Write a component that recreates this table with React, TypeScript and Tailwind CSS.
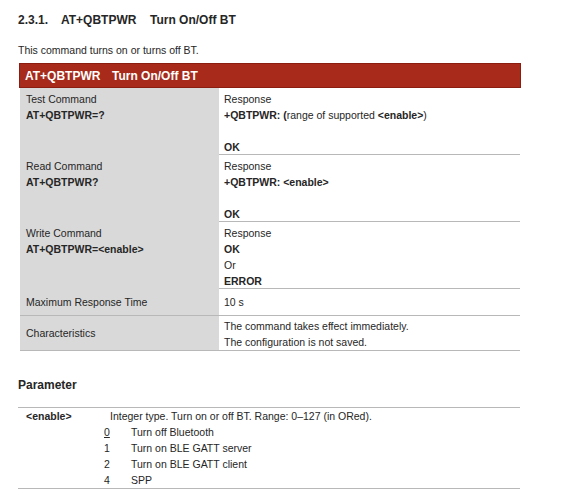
import React from "react";

const rows = [
  {
    label: "Test Command",
    cmd: "AT+QBTPWR=?",
    lines: [
      <span>Response</span>,
      <span>
        <b>+QBTPWR: (</b>range of supported <b>&lt;enable&gt;</b>)
      </span>,
      <span>&nbsp;</span>,
      <b>OK</b>,
    ],
  },
  {
    label: "Read Command",
    cmd: "AT+QBTPWR?",
    lines: [
      <span>Response</span>,
      <b>+QBTPWR: &lt;enable&gt;</b>,
      <span>&nbsp;</span>,
      <b>OK</b>,
    ],
  },
  {
    label: "Write Command",
    cmd: "AT+QBTPWR=<enable>",
    lines: [<span>Response</span>, <b>OK</b>, <span>Or</span>, <b>ERROR</b>],
  },
];

const values = [
  { v: "0", text: "Turn off Bluetooth", def: true },
  { v: "1", text: "Turn on BLE GATT server" },
  { v: "2", text: "Turn on BLE GATT client" },
  { v: "4", text: "SPP" },
];

export default function App() {
  return (
    <div className="w-[566px] h-[500px] bg-white text-[#262626] font-['Liberation_Sans',Arial,sans-serif] text-[10.5px] leading-[16px]">
      <div className="pl-[18px] pt-[12px] w-[520px]">
        <h2 className="flex text-[12px] leading-[16px] font-bold">
          <span className="w-[43px]">2.3.1.</span>
          <span className="w-[89px]">AT+QBTPWR</span>
          <span>Turn On/Off BT</span>
        </h2>

        <p className="mt-[14px]">This command turns on or turns off BT.</p>

        {/* command table */}
        <div className="mt-[5px] ml-[1px] w-[502px] h-[25px] flex items-center pl-[5px] bg-[#a72a1a] border border-[#8a1d10] text-white text-[12px] font-bold">
          <span className="w-[87px]">AT+QBTPWR</span>
          <span>Turn On/Off BT</span>
        </div>

        <div className="ml-[2px] w-[500px]">
          {rows.map((r) => (
            <div
              key={r.label}
              className="grid grid-cols-[199px_1fr] h-[67px] border-b border-[#b8b8b8]"
            >
              <div className="bg-[#d9d9d9] pl-[6px] pt-[3px]">
                <div>{r.label}</div>
                <div className="font-bold">{r.cmd}</div>
              </div>
              <div className="pl-[5px] pt-[3px]">
                {r.lines.map((l, i) => (
                  <div key={i}>{l}</div>
                ))}
              </div>
            </div>
          ))}

          <div className="grid grid-cols-[199px_1fr] h-[27px] border-b border-[#b8b8b8]">
            <div className="bg-[#d9d9d9] pl-[6px] flex items-center">Maximum Response Time</div>
            <div className="pl-[5px] flex items-center">10 s</div>
          </div>

          <div className="grid grid-cols-[199px_1fr] h-[35px] border-b border-[#b8b8b8]">
            <div className="bg-[#d9d9d9] pl-[6px] flex items-center">Characteristics</div>
            <div className="pl-[5px] pt-[2px]">
              <div>The command takes effect immediately.</div>
              <div>The configuration is not saved.</div>
            </div>
          </div>
        </div>

        <h3 className="mt-[26px] text-[12px] leading-[16px] font-bold">Parameter</h3>

        <div className="mt-[14px] w-[502px] border-t border-b border-[#b8b8b8] flex">
          <div className="w-[92px] pl-[8px] font-bold">&lt;enable&gt;</div>
          <div className="flex-1">
            <div>Integer type. Turn on or off BT. Range: 0–127 (in ORed).</div>
            {values.map((x) => (
              <div key={x.v} className="flex -ml-[6px]">
                <span className={"w-[27px] " + (x.def ? "underline" : "")}>{x.v}</span>
                <span>{x.text}</span>
              </div>
            ))}
          </div>
        </div>
      </div>
    </div>
  );
}
